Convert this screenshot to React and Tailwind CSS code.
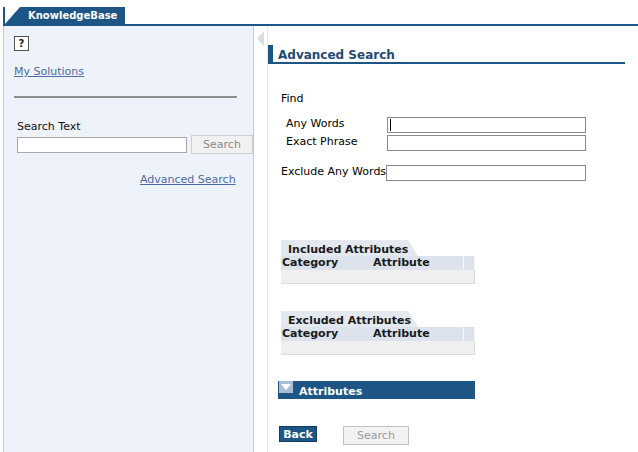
import React from "react";

const BLUE = "bg-[#1d5585]";

function AttrTable({ title }) {
  return (
    <div className="ml-[13px] w-[194px]">
      <div className="h-[16px] w-[137px] bg-[#e4e8ef] pl-[7px] pt-[3px] text-[11px] font-bold leading-[13px] text-[#1a1a1a] [clip-path:polygon(0_0,127px_0,137px_100%,0_100%)]">
        {title}
      </div>
      <div className="flex h-[14px] bg-[#dde3ed] text-[11px] font-bold leading-[14px] text-[#1a1a1a]">
        <div className="w-[91px] pl-[1px]">Category</div>
        <div className="w-[92px] border-r border-[#f4f6fa] pl-[1px]">Attribute</div>
        <div className="flex-1 border-r border-[#f4f6fa]" />
      </div>
      <div className="h-[14px] border-b border-r border-[#dcdcdc] bg-[#efefef]" />
    </div>
  );
}

function LeftPanel() {
  return (
    <div className="h-full w-[251px] shrink-0 border-x border-[#c6c8cc] bg-[#eef2fa] pl-[10px]">
      <div className="mt-[10px] flex h-[15px] w-[15px] items-center justify-center border border-[#555] bg-white text-[10px] font-bold leading-none text-[#222]">
        ?
      </div>
      <div className="mt-[14px] text-[#4d6ca3] underline">My Solutions</div>
      <div className="mt-[18px] h-[2px] w-[223px] bg-[#8e8e8e]" />
      <div className="ml-[3px] mt-[22px] text-[#111]">Search Text</div>
      <div className="ml-[3px] mt-[2px] flex items-center">
        <div className="h-[16px] w-[170px] border border-[#a8a8a8] bg-white" />
        <div className="ml-[4px] flex h-[19px] w-[62px] items-center justify-center border border-[#cfcfcf] bg-[#f1f1f1] text-[#8a8a8a]">
          Search
        </div>
      </div>
      <div className="ml-[126px] mt-[19px] text-[#4d6ca3] underline">Advanced Search</div>
    </div>
  );
}

export default function App() {
  return (
    <div className="h-[452px] w-[638px] overflow-hidden bg-white font-['DejaVu_Sans',Verdana,sans-serif] text-[11px] leading-[13px] text-black">
      <div className="ml-[3px] h-[26px] border-b-2 border-[#1d5585] pt-[7px]">
        <div className={`relative h-[17px] w-[122px] ${BLUE} pl-[25px] text-[10px] font-bold leading-[17px] text-white`}>
          <svg className="absolute left-0 top-0" width="18" height="17">
            <polygon points="2,0 17,0 2,17" fill="#fff" />
          </svg>
          <span className="relative">KnowledgeBase</span>
        </div>
      </div>

      <div className="ml-[3px] flex h-[426px]">
        <LeftPanel />

        <div className="w-[13px] shrink-0 pl-[3px] pt-[5px]">
          <svg width="8" height="15">
            <polygon points="7,0 7,15 0,7.5" fill="#d9dee7" />
          </svg>
        </div>

        <div className="flex-1 border-l border-[#e6e8ec]">
          <div className="mt-[19px] h-[19px] w-[357px] border-b-2 border-l-[5px] border-[#1d5585] pl-[5px] pt-[3px] text-[12px] font-bold leading-[14px] text-[#1f4a74]">
            Advanced Search
          </div>

          <div className="ml-[13px] mt-[28px]">Find</div>

          <div className="ml-[18px] mt-[12px] flex items-start">
            <div className="w-[101px] shrink-0">Any Words</div>
            <div className="flex h-[16px] w-[199px] items-center border border-[#8a8a8a] bg-white pl-[2px]">
              <div className="h-[12px] w-px bg-black" />
            </div>
          </div>
          <div className="ml-[18px] mt-[2px] flex items-start">
            <div className="w-[101px] shrink-0">Exact Phrase</div>
            <div className="h-[16px] w-[199px] border border-[#8a8a8a] bg-white" />
          </div>
          <div className="ml-[13px] mt-[14px] flex items-start">
            <div className="w-[105px] shrink-0 whitespace-nowrap">Exclude Any Words</div>
            <div className="h-[16px] w-[200px] border border-[#8a8a8a] bg-white" />
          </div>

          <div className="mt-[59px]">
            <AttrTable title="Included Attributes" />
          </div>
          <div className="mt-[27px]">
            <AttrTable title="Excluded Attributes" />
          </div>

          <div className={`ml-[10px] mt-[26px] flex h-[18px] w-[197px] ${BLUE}`}>
            <div className="ml-[1px] flex h-[12px] w-[14px] items-center justify-center bg-[#a9bdd5]">
              <svg width="10" height="6">
                <polygon points="0,0 10,0 5,6" fill="#fff" />
              </svg>
            </div>
            <div className="ml-[6px] pt-[4px] text-[11px] font-bold leading-[14px] text-white">Attributes</div>
          </div>

          <div className="ml-[11px] mt-[27px] flex items-start">
            <div className={`flex h-[16px] w-[38px] items-center justify-center border border-[#123d63] ${BLUE} font-bold text-white`}>
              Back
            </div>
            <div className="ml-[26px] flex h-[19px] w-[66px] items-center justify-center border border-[#c2c2c2] bg-[#f2f2f2] text-[#9a9a9a]">
              Search
            </div>
          </div>
        </div>
      </div>
    </div>
  );
}
